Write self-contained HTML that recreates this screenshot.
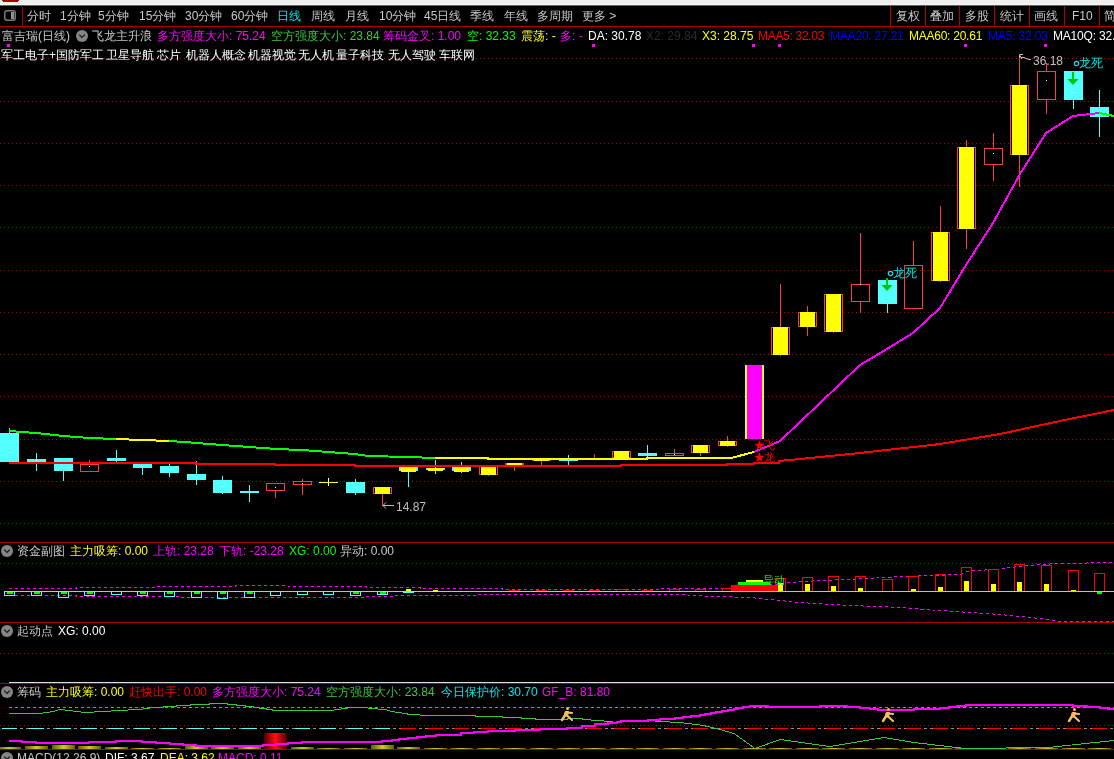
<!DOCTYPE html><html><head><meta charset="utf-8"><style>
html,body{margin:0;padding:0;background:#000;overflow:hidden;}
body{width:1114px;height:759px;position:relative;font-family:'Liberation Sans',sans-serif;font-size:12px;line-height:14px;-webkit-font-smoothing:antialiased;}
div{will-change:transform;}
svg{display:block;}
</style></head><body>
<svg style="position:absolute;left:0;top:0" width="1114" height="759" viewBox="0 0 1114 759" shape-rendering="crispEdges">
<rect x="0" y="0" width="1114" height="5" fill="#efefef"/>
<rect x="0" y="4" width="1114" height="1" fill="#f8f8f8"/>
<rect x="0" y="5" width="1114" height="1" fill="#606060"/>
<rect x="2" y="0" width="17" height="1.5" fill="#b00000" rx="0.7"/>
<rect x="0" y="26" width="1114" height="1" fill="#aa0000"/>
<rect x="22" y="7" width="1" height="19" fill="#aa0000"/>
<rect x="890" y="6" width="1" height="20" fill="#aa0000"/>
<rect x="925" y="6" width="1" height="20" fill="#aa0000"/>
<rect x="959" y="6" width="1" height="20" fill="#aa0000"/>
<rect x="994" y="6" width="1" height="20" fill="#aa0000"/>
<rect x="1029" y="6" width="1" height="20" fill="#aa0000"/>
<rect x="1064" y="6" width="1" height="20" fill="#aa0000"/>
<rect x="1099" y="6" width="1" height="20" fill="#aa0000"/>
<rect x="4.75" y="10.75" width="10.5" height="9.5" rx="2.2" fill="none" stroke="#7a7a7a" stroke-width="1.5" shape-rendering="auto"/>
<rect x="11" y="12" width="3" height="7" fill="#909090"/>
<rect x="7" y="44" width="3" height="3" fill="#ff00ff"/>
<rect x="592" y="44" width="3" height="3" fill="#ff00ff"/>
<rect x="752" y="44" width="3" height="3" fill="#ff00ff"/>
<rect x="778" y="44" width="3" height="3" fill="#ff00ff"/>
<rect x="964" y="44" width="3" height="3" fill="#ff00ff"/>
<rect x="1044" y="44" width="3" height="3" fill="#ff00ff"/>
<line x1="0" y1="58.5" x2="1114" y2="58.5" stroke="#b80000" stroke-width="1" stroke-dasharray="1 3"/>
<line x1="0" y1="101.5" x2="1114" y2="101.5" stroke="#b80000" stroke-width="1" stroke-dasharray="1 3"/>
<line x1="0" y1="143.5" x2="1114" y2="143.5" stroke="#b80000" stroke-width="1" stroke-dasharray="1 3"/>
<line x1="0" y1="185.5" x2="1114" y2="185.5" stroke="#b80000" stroke-width="1" stroke-dasharray="1 3"/>
<line x1="0" y1="227.5" x2="1114" y2="227.5" stroke="#b80000" stroke-width="1" stroke-dasharray="1 3"/>
<line x1="0" y1="270.5" x2="1114" y2="270.5" stroke="#b80000" stroke-width="1" stroke-dasharray="1 3"/>
<line x1="0" y1="312.5" x2="1114" y2="312.5" stroke="#b80000" stroke-width="1" stroke-dasharray="1 3"/>
<line x1="0" y1="354.5" x2="1114" y2="354.5" stroke="#b80000" stroke-width="1" stroke-dasharray="1 3"/>
<line x1="0" y1="396.5" x2="1114" y2="396.5" stroke="#b80000" stroke-width="1" stroke-dasharray="1 3"/>
<line x1="0" y1="439.5" x2="1114" y2="439.5" stroke="#b80000" stroke-width="1" stroke-dasharray="1 3"/>
<line x1="0" y1="481.5" x2="1114" y2="481.5" stroke="#b80000" stroke-width="1" stroke-dasharray="1 3"/>
<line x1="0" y1="523.5" x2="1114" y2="523.5" stroke="#b80000" stroke-width="1" stroke-dasharray="1 3"/>
</svg>
<svg style="position:absolute;left:0;top:0" width="1114" height="759" viewBox="0 0 1114 759" shape-rendering="crispEdges">
<defs><clipPath id="cm"><rect x="0" y="47" width="1114" height="495"/></clipPath></defs>
<g clip-path="url(#cm)">
<rect x="9" y="428" width="1" height="35" fill="#54ffff"/><rect x="0" y="433" width="19" height="29" fill="#54ffff"/><rect x="9" y="452" width="1" height="1" fill="#fff"/><rect x="36" y="453" width="1" height="18" fill="#54ffff"/><rect x="27" y="459" width="19" height="3" fill="#54ffff"/><rect x="36" y="460" width="1" height="1" fill="#fff"/><rect x="63" y="458" width="1" height="23" fill="#54ffff"/><rect x="54" y="458" width="19" height="13" fill="#54ffff"/><rect x="63" y="468" width="1" height="1" fill="#fff"/><rect x="89" y="460" width="1" height="4" fill="#ff3c3c"/><rect x="80.5" y="464.5" width="18" height="7" fill="none" stroke="#ff3c3c" stroke-width="1"/><rect x="89" y="466" width="1" height="1" fill="#fff"/><rect x="116" y="450" width="1" height="13" fill="#54ffff"/><rect x="107" y="458" width="19" height="3" fill="#54ffff"/><rect x="116" y="459" width="1" height="1" fill="#fff"/><rect x="142" y="464" width="1" height="11" fill="#54ffff"/><rect x="133" y="464" width="19" height="4" fill="#54ffff"/><rect x="142" y="466" width="1" height="1" fill="#fff"/><rect x="169" y="464" width="1" height="13" fill="#54ffff"/><rect x="160" y="466" width="19" height="7" fill="#54ffff"/><rect x="169" y="469" width="1" height="1" fill="#fff"/><rect x="196" y="461" width="1" height="24" fill="#54ffff"/><rect x="187" y="474" width="19" height="6" fill="#54ffff"/><rect x="196" y="477" width="1" height="1" fill="#fff"/><rect x="222" y="476" width="1" height="18" fill="#54ffff"/><rect x="213" y="480" width="19" height="13" fill="#54ffff"/><rect x="222" y="486" width="1" height="1" fill="#fff"/><rect x="249" y="485" width="1" height="17" fill="#54ffff"/><rect x="240" y="491" width="19" height="2" fill="#54ffff"/><rect x="249" y="492" width="1" height="1" fill="#fff"/><rect x="275" y="491" width="1" height="7" fill="#ff3c3c"/><rect x="266.5" y="483.5" width="18" height="7" fill="none" stroke="#ff3c3c" stroke-width="1"/><rect x="275" y="487" width="1" height="1" fill="#fff"/><rect x="302" y="479" width="1" height="2" fill="#ff3c3c"/><rect x="302" y="485" width="1" height="10" fill="#ff3c3c"/><rect x="293.5" y="481.5" width="18" height="3" fill="none" stroke="#ff3c3c" stroke-width="1"/><rect x="302" y="483" width="1" height="1" fill="#fff"/><rect x="328" y="478" width="1" height="8" fill="#fff"/><rect x="319" y="482" width="19" height="1" fill="#fff"/><rect x="321" y="482" width="15" height="1" fill="#ffff00"/><rect x="355" y="479" width="1" height="16" fill="#54ffff"/><rect x="346" y="482" width="19" height="11" fill="#54ffff"/><rect x="355" y="487" width="1" height="1" fill="#fff"/><rect x="382" y="487" width="1" height="19" fill="#ff3c3c"/><rect x="373.5" y="487.5" width="18" height="6" fill="none" stroke="#ff3c3c" stroke-width="1"/><rect x="375" y="487" width="15" height="7" fill="#ffff00"/><rect x="382" y="491" width="1" height="1" fill="#fff"/><rect x="408" y="467" width="1" height="20" fill="#54ffff"/><rect x="399" y="467" width="19" height="4" fill="#54ffff"/><rect x="401" y="467" width="15" height="5" fill="#ffff00"/><rect x="408" y="469" width="1" height="1" fill="#fff"/><rect x="435" y="460" width="1" height="14" fill="#54ffff"/><rect x="426" y="468" width="19" height="2" fill="#54ffff"/><rect x="428" y="468" width="15" height="3" fill="#ffff00"/><rect x="435" y="469" width="1" height="1" fill="#fff"/><rect x="461" y="462" width="1" height="11" fill="#54ffff"/><rect x="452" y="467" width="19" height="4" fill="#54ffff"/><rect x="454" y="467" width="15" height="5" fill="#ffff00"/><rect x="461" y="469" width="1" height="1" fill="#fff"/><rect x="488" y="466" width="1" height="10" fill="#ff3c3c"/><rect x="479.5" y="466.5" width="18" height="8" fill="none" stroke="#ff3c3c" stroke-width="1"/><rect x="481" y="466" width="15" height="9" fill="#ffff00"/><rect x="488" y="470" width="1" height="1" fill="#fff"/><rect x="514" y="463" width="1" height="8" fill="#ff3c3c"/><rect x="505.5" y="463.5" width="18" height="1" fill="none" stroke="#ff3c3c" stroke-width="1"/><rect x="507" y="463" width="15" height="2" fill="#ffff00"/><rect x="514" y="464" width="1" height="1" fill="#fff"/><rect x="541" y="459" width="1" height="6" fill="#ff3c3c"/><rect x="532.5" y="459.5" width="18" height="1" fill="none" stroke="#ff3c3c" stroke-width="1"/><rect x="534" y="459" width="15" height="2" fill="#ffff00"/><rect x="541" y="460" width="1" height="1" fill="#fff"/><rect x="568" y="455" width="1" height="11" fill="#54ffff"/><rect x="559" y="460" width="19" height="1" fill="#54ffff"/><rect x="568" y="460" width="1" height="1" fill="#fff"/><rect x="594" y="454" width="1" height="4" fill="#ff3c3c"/><rect x="585.5" y="458.5" width="18" height="0" fill="none" stroke="#ff3c3c" stroke-width="1"/><rect x="594" y="458" width="1" height="1" fill="#fff"/><rect x="621" y="451" width="1" height="8" fill="#ff3c3c"/><rect x="612.5" y="451.5" width="18" height="6" fill="none" stroke="#ff3c3c" stroke-width="1"/><rect x="614" y="451" width="15" height="7" fill="#ffff00"/><rect x="621" y="454" width="1" height="1" fill="#fff"/><rect x="647" y="445" width="1" height="13" fill="#54ffff"/><rect x="638" y="453" width="19" height="3" fill="#54ffff"/><rect x="647" y="454" width="1" height="1" fill="#fff"/><rect x="674" y="449" width="1" height="4" fill="#ff3c3c"/><rect x="665.5" y="453.5" width="18" height="2" fill="none" stroke="#ff3c3c" stroke-width="1"/><rect x="674" y="454" width="1" height="1" fill="#fff"/><rect x="700" y="445" width="1" height="11" fill="#ff3c3c"/><rect x="691.5" y="445.5" width="18" height="7" fill="none" stroke="#ff3c3c" stroke-width="1"/><rect x="693" y="445" width="15" height="8" fill="#ffff00"/><rect x="700" y="449" width="1" height="1" fill="#fff"/><rect x="727" y="436" width="1" height="11" fill="#ff3c3c"/><rect x="718.5" y="441.5" width="18" height="4" fill="none" stroke="#ff3c3c" stroke-width="1"/><rect x="720" y="441" width="15" height="5" fill="#ffff00"/><rect x="727" y="443" width="1" height="1" fill="#fff"/><rect x="745" y="365" width="19" height="74" fill="#ffff00"/><rect x="747" y="365" width="15" height="74" fill="#ff00ff"/><rect x="780" y="284" width="1" height="72" fill="#ff3c3c"/><rect x="771.5" y="327.5" width="18" height="27" fill="none" stroke="#ff3c3c" stroke-width="1"/><rect x="773" y="327" width="15" height="28" fill="#ffff00"/><rect x="780" y="328" width="1" height="1" fill="#fff"/><rect x="807" y="306" width="1" height="30" fill="#ff3c3c"/><rect x="798.5" y="312.5" width="18" height="14" fill="none" stroke="#ff3c3c" stroke-width="1"/><rect x="800" y="312" width="15" height="15" fill="#ffff00"/><rect x="807" y="317" width="1" height="1" fill="#fff"/><rect x="833" y="294" width="1" height="39" fill="#ff3c3c"/><rect x="824.5" y="294.5" width="18" height="37" fill="none" stroke="#ff3c3c" stroke-width="1"/><rect x="826" y="294" width="15" height="38" fill="#ffff00"/><rect x="833" y="306" width="1" height="1" fill="#fff"/><rect x="860" y="233" width="1" height="51" fill="#ff3c3c"/><rect x="860" y="302" width="1" height="11" fill="#ff3c3c"/><rect x="851.5" y="284.5" width="18" height="17" fill="none" stroke="#ff3c3c" stroke-width="1"/><rect x="860" y="284" width="1" height="1" fill="#fff"/><rect x="887" y="280" width="1" height="33" fill="#54ffff"/><rect x="878" y="280" width="19" height="24" fill="#54ffff"/><rect x="887" y="297" width="1" height="1" fill="#fff"/><rect x="913" y="241" width="1" height="24" fill="#ff3c3c"/><rect x="904.5" y="265.5" width="18" height="43" fill="none" stroke="#ff3c3c" stroke-width="1"/><rect x="940" y="206" width="1" height="76" fill="#ff3c3c"/><rect x="931.5" y="232.5" width="18" height="48" fill="none" stroke="#ff3c3c" stroke-width="1"/><rect x="933" y="232" width="15" height="49" fill="#ffff00"/><rect x="940" y="256" width="1" height="1" fill="#fff"/><rect x="966" y="140" width="1" height="109" fill="#ff3c3c"/><rect x="957.5" y="147.5" width="18" height="81" fill="none" stroke="#ff3c3c" stroke-width="1"/><rect x="959" y="147" width="15" height="82" fill="#ffff00"/><rect x="966" y="176" width="1" height="1" fill="#fff"/><rect x="993" y="133" width="1" height="15" fill="#ff3c3c"/><rect x="993" y="165" width="1" height="16" fill="#ff3c3c"/><rect x="984.5" y="148.5" width="18" height="16" fill="none" stroke="#ff3c3c" stroke-width="1"/><rect x="993" y="153" width="1" height="1" fill="#fff"/><rect x="1019" y="56" width="1" height="131" fill="#ff3c3c"/><rect x="1010.5" y="85.5" width="18" height="69" fill="none" stroke="#ff3c3c" stroke-width="1"/><rect x="1012" y="85" width="15" height="70" fill="#ffff00"/><rect x="1019" y="108" width="1" height="1" fill="#fff"/><rect x="1046" y="63" width="1" height="8" fill="#ff3c3c"/><rect x="1046" y="100" width="1" height="14" fill="#ff3c3c"/><rect x="1037.5" y="71.5" width="18" height="28" fill="none" stroke="#ff3c3c" stroke-width="1"/><rect x="1046" y="80" width="1" height="1" fill="#fff"/><rect x="1073" y="71" width="1" height="38" fill="#54ffff"/><rect x="1064" y="71" width="19" height="29" fill="#54ffff"/><rect x="1073" y="92" width="1" height="1" fill="#fff"/><rect x="1099" y="90" width="1" height="47" fill="#54ffff"/><rect x="1090" y="107" width="19" height="10" fill="#54ffff"/><rect x="1099" y="112" width="1" height="1" fill="#fff"/>
<polyline points="9,431 22,432 36,433 45,434 55,435 63,436 89,438 116,439 142,440 169,441 185,442 196,443 210,444 222,445 236,446 249,447 263,448 276,449 302,450 315,451 328,452 341,453 355,454 368,456 408,457 435,458" fill="none" stroke="#00ff00" stroke-width="2"/>
<polyline points="116,439 142,440 169,441" fill="none" stroke="#ffff00" stroke-width="2"/>
<polyline points="435,458 488,458 488,459 647,459 647,458 731,458 754,452" fill="none" stroke="#ffff00" stroke-width="2"/>
<polyline points="9,463 196,463 196,464 275,464 275,465 355,465 355,466 621,466 621,465 727,465 727,464 754,464 754,463 779,463 779,461 800,459 860,453 940,444 1000,434 1060,421 1114,410" fill="none" stroke="#ff0000" stroke-width="2"/>
<polyline points="754,452 780,441 860,365 887,349 913,333 940,308 966,265 993,223 1020,174 1046,133 1073,116 1099,113" fill="none" stroke="#ff00ff" stroke-width="2"/>
<polyline points="1099,113 1114,116" fill="none" stroke="#00ff00" stroke-width="2"/>
<rect x="886" y="278" width="2" height="8" fill="#00c800"/><polygon points="881.5,285 892.5,285 887,291" fill="#00c800" shape-rendering="auto"/>
<rect x="1072" y="72" width="2" height="8" fill="#00c800"/><polygon points="1067.5,79 1078.5,79 1073,85" fill="#00c800" shape-rendering="auto"/>
<polygon points="759.50,440.30 760.78,443.73 764.45,443.89 761.58,446.17 762.56,449.71 759.50,447.68 756.44,449.71 757.42,446.17 754.55,443.89 758.22,443.73" fill="#ff0000" shape-rendering="auto"/>
<polygon points="759.50,452.30 760.78,455.73 764.45,455.89 761.58,458.17 762.56,461.71 759.50,459.68 756.44,461.71 757.42,458.17 754.55,455.89 758.22,455.73" fill="#ff0000" shape-rendering="auto"/>
<g stroke="#c0c0c0" stroke-width="1" fill="none" shape-rendering="auto">
<line x1="383" y1="505.5" x2="394" y2="505.5"/><polyline points="386,502.5 383,505.5 386,508.5"/>
<polyline points="1019.5,58 1019.5,54.5 1023,54.5"/><line x1="1019.5" y1="55" x2="1022" y2="59"/><polyline points="1021,57.5 1024,57.5 1026,58.5 1029,59.5 1031,59.5"/>
<circle cx="890.5" cy="273.5" r="2.2" fill="none" stroke="#00e8e8" stroke-width="1.2" shape-rendering="auto"/>
<circle cx="1076.5" cy="63.5" r="2.2" fill="none" stroke="#00e8e8" stroke-width="1.2" shape-rendering="auto"/>
</g>
</g>
</svg>
<svg style="position:absolute;left:0;top:0" width="1114" height="759" viewBox="0 0 1114 759" shape-rendering="crispEdges">
<rect x="0" y="542" width="1114" height="1" fill="#aa0000"/>
<rect x="0" y="622" width="1114" height="1" fill="#aa0000"/>
<rect x="0" y="683" width="1114" height="1" fill="#aa0000"/>
<rect x="9" y="682" width="1105" height="1" fill="#e0e0e0"/>
<rect x="0" y="749" width="1114" height="1" fill="#aa0000"/>
<line x1="0" y1="563.5" x2="1114" y2="563.5" stroke="#b80000" stroke-width="1" stroke-dasharray="1 3"/>
<line x1="0" y1="653.5" x2="1114" y2="653.5" stroke="#b80000" stroke-width="1" stroke-dasharray="1 3"/>
<line x1="0" y1="725.5" x2="1114" y2="725.5" stroke="#b80000" stroke-width="1" stroke-dasharray="1 3"/>
<rect x="4" y="591" width="1110" height="1" fill="#c0c0c0"/>
<polyline points="9,588.5 76,588.5 76,587.5 157,587.5 157,586.5 235,586.5 235,585.5 288,585.5 288,586.5 366,586.5 366,587.5 420,587.5 420,588.5 502,588.5 502,589.5 660,589.5 660,588.5 740,588.5 790,582.5 820,580.5 870,578.5 900,576.5 960,574.5 970,570.5 1000,569.5 1010,567.5 1040,564.5 1060,563.5 1114,562.5" fill="none" stroke="#ff00ff" stroke-width="1" stroke-dasharray="3 3"/>
<polyline points="9,595.5 76,595.5 76,596.5 180,596.5 180,597.5 366,597.5 366,596.5 394,596.5 394,595.5 475,595.5 475,594.5 688,594.5 688,595.5 750,597.5 800,602.5 850,605.5 900,607.5 940,610.5 1000,614.5 1040,618.5 1060,621.5 1114,621.5" fill="none" stroke="#ff00ff" stroke-width="1" stroke-dasharray="3 3"/>
<rect x="4.5" y="591.5" width="10" height="4" fill="none" stroke="#54ffff"/>
<rect x="7" y="592" width="6" height="2" fill="#00ff00"/>
<rect x="31.5" y="591.5" width="10" height="4" fill="none" stroke="#54ffff"/>
<rect x="34" y="592" width="6" height="2" fill="#00ff00"/>
<rect x="58.5" y="591.5" width="10" height="6" fill="none" stroke="#54ffff"/>
<rect x="61" y="592" width="6" height="2" fill="#00ff00"/>
<rect x="84.5" y="591.5" width="10" height="4" fill="none" stroke="#54ffff"/>
<rect x="87" y="592" width="6" height="2" fill="#00ff00"/>
<rect x="111.5" y="591.5" width="10" height="3" fill="none" stroke="#54ffff"/>
<rect x="137.5" y="591.5" width="10" height="4" fill="none" stroke="#54ffff"/>
<rect x="140" y="592" width="6" height="2" fill="#00ff00"/>
<rect x="164.5" y="591.5" width="10" height="5" fill="none" stroke="#54ffff"/>
<rect x="167" y="592" width="6" height="2" fill="#00ff00"/>
<rect x="191.5" y="591.5" width="10" height="6" fill="none" stroke="#54ffff"/>
<rect x="194" y="592" width="6" height="2" fill="#00ff00"/>
<rect x="217.5" y="591.5" width="10" height="7" fill="none" stroke="#54ffff"/>
<rect x="220" y="592" width="6" height="2" fill="#00ff00"/>
<rect x="244.5" y="591.5" width="10" height="6" fill="none" stroke="#54ffff"/>
<rect x="247" y="592" width="6" height="2" fill="#00ff00"/>
<rect x="270.5" y="591.5" width="10" height="4" fill="none" stroke="#54ffff"/>
<rect x="297.5" y="591.5" width="10" height="3" fill="none" stroke="#54ffff"/>
<rect x="323.5" y="591.5" width="10" height="3" fill="none" stroke="#54ffff"/>
<rect x="350.5" y="591.5" width="10" height="4" fill="none" stroke="#54ffff"/>
<rect x="353" y="592" width="6" height="2" fill="#00ff00"/>
<rect x="377.5" y="591.5" width="10" height="3" fill="none" stroke="#54ffff"/>
<rect x="380" y="592" width="6" height="2" fill="#00ff00"/>
<rect x="403" y="591" width="11" height="2" fill="#54ffff"/><rect x="406" y="589" width="5" height="2" fill="#ffff00"/>
<rect x="433" y="590" width="5" height="2" fill="#ffff00"/>
<rect x="509" y="590" width="11" height="1" fill="#ff0000"/>
<rect x="536" y="590" width="11" height="1" fill="#ff0000"/>
<rect x="563" y="590" width="11" height="1" fill="#ff0000"/>
<rect x="589" y="590" width="11" height="1" fill="#ff0000"/>
<rect x="642" y="590" width="11" height="1" fill="#ff0000"/>
<polyline points="616.5,591 616.5,589.5 626.5,589.5 626.5,591" fill="none" stroke="#ff0000"/>
<polyline points="669.5,591 669.5,589.5 679.5,589.5 679.5,591" fill="none" stroke="#ff0000"/>
<polyline points="695.5,591 695.5,589.5 705.5,589.5 705.5,591" fill="none" stroke="#ff0000"/>
<polyline points="722.5,591 722.5,588.5 732.5,588.5 732.5,591" fill="none" stroke="#ff0000"/>
<rect x="731" y="585" width="47" height="6" fill="#ff0000"/>
<rect x="738" y="582" width="32" height="3" fill="#00ff00"/>
<rect x="746" y="580" width="17" height="2" fill="#ffff00"/>
<rect x="778" y="583" width="5" height="8" fill="#ffff00"/>
<polyline points="775.5,591 775.5,578.5 785.5,578.5 785.5,591" fill="none" stroke="#ff0000"/>
<polyline points="802.5,591 802.5,577.5 812.5,577.5 812.5,591" fill="none" stroke="#ff0000"/>
<rect x="805" y="584" width="5" height="7" fill="#ffff00"/>
<polyline points="828.5,591 828.5,576.5 838.5,576.5 838.5,591" fill="none" stroke="#ff0000"/>
<rect x="831" y="586" width="5" height="5" fill="#ffff00"/>
<polyline points="855.5,591 855.5,576.5 865.5,576.5 865.5,591" fill="none" stroke="#ff0000"/>
<rect x="858" y="588" width="5" height="3" fill="#ffff00"/>
<polyline points="882.5,591 882.5,579.5 892.5,579.5 892.5,591" fill="none" stroke="#ff0000"/>
<polyline points="908.5,591 908.5,576.5 918.5,576.5 918.5,591" fill="none" stroke="#ff0000"/>
<rect x="911" y="589" width="5" height="2" fill="#ffff00"/>
<polyline points="935.5,591 935.5,574.5 945.5,574.5 945.5,591" fill="none" stroke="#ff0000"/>
<rect x="938" y="587" width="5" height="4" fill="#ffff00"/>
<polyline points="961.5,591 961.5,567.5 971.5,567.5 971.5,591" fill="none" stroke="#ff0000"/>
<rect x="964" y="581" width="5" height="10" fill="#ffff00"/>
<polyline points="988.5,591 988.5,569.5 998.5,569.5 998.5,591" fill="none" stroke="#ff0000"/>
<rect x="991" y="584" width="5" height="7" fill="#ffff00"/>
<polyline points="1014.5,591 1014.5,564.5 1024.5,564.5 1024.5,591" fill="none" stroke="#ff0000"/>
<rect x="1017" y="582" width="5" height="9" fill="#ffff00"/>
<polyline points="1041.5,591 1041.5,565.5 1051.5,565.5 1051.5,591" fill="none" stroke="#ff0000"/>
<rect x="1044" y="584" width="5" height="7" fill="#ffff00"/>
<polyline points="1068.5,591 1068.5,570.5 1078.5,570.5 1078.5,591" fill="none" stroke="#ff0000"/>
<rect x="1071" y="590" width="5" height="1" fill="#ffff00"/>
<polyline points="1094.5,591 1094.5,573.5 1104.5,573.5 1104.5,591" fill="none" stroke="#ff0000"/>
<rect x="1097" y="592" width="5" height="2" fill="#00ff00"/>
<line x1="9" y1="707.5" x2="1114" y2="707.5" stroke="#00c8c8" stroke-dasharray="3 3"/>
<rect x="2" y="728" width="15" height="1" fill="#54ffff"/>
<rect x="20" y="728" width="3" height="1" fill="#909090"/>
<rect x="26" y="728" width="3" height="1" fill="#909090"/>
<rect x="29" y="728" width="15" height="1" fill="#54ffff"/>
<rect x="47" y="728" width="3" height="1" fill="#909090"/>
<rect x="53" y="728" width="3" height="1" fill="#909090"/>
<rect x="56" y="728" width="15" height="1" fill="#54ffff"/>
<rect x="74" y="728" width="3" height="1" fill="#909090"/>
<rect x="80" y="728" width="3" height="1" fill="#909090"/>
<rect x="82" y="728" width="15" height="1" fill="#54ffff"/>
<rect x="100" y="728" width="3" height="1" fill="#909090"/>
<rect x="106" y="728" width="3" height="1" fill="#909090"/>
<rect x="109" y="728" width="15" height="1" fill="#54ffff"/>
<rect x="127" y="728" width="3" height="1" fill="#909090"/>
<rect x="133" y="728" width="3" height="1" fill="#909090"/>
<rect x="135" y="728" width="15" height="1" fill="#54ffff"/>
<rect x="153" y="728" width="3" height="1" fill="#909090"/>
<rect x="159" y="728" width="3" height="1" fill="#909090"/>
<rect x="162" y="728" width="15" height="1" fill="#54ffff"/>
<rect x="180" y="728" width="3" height="1" fill="#909090"/>
<rect x="186" y="728" width="3" height="1" fill="#909090"/>
<rect x="189" y="728" width="15" height="1" fill="#54ffff"/>
<rect x="207" y="728" width="3" height="1" fill="#909090"/>
<rect x="213" y="728" width="3" height="1" fill="#909090"/>
<rect x="215" y="728" width="15" height="1" fill="#54ffff"/>
<rect x="233" y="728" width="3" height="1" fill="#909090"/>
<rect x="239" y="728" width="3" height="1" fill="#909090"/>
<rect x="242" y="728" width="15" height="1" fill="#54ffff"/>
<rect x="260" y="728" width="3" height="1" fill="#909090"/>
<rect x="266" y="728" width="3" height="1" fill="#909090"/>
<rect x="268" y="728" width="15" height="1" fill="#54ffff"/>
<rect x="286" y="728" width="3" height="1" fill="#909090"/>
<rect x="292" y="728" width="3" height="1" fill="#909090"/>
<rect x="295" y="728" width="15" height="1" fill="#54ffff"/>
<rect x="313" y="728" width="3" height="1" fill="#909090"/>
<rect x="319" y="728" width="3" height="1" fill="#909090"/>
<rect x="321" y="728" width="15" height="1" fill="#54ffff"/>
<rect x="339" y="728" width="3" height="1" fill="#909090"/>
<rect x="345" y="728" width="3" height="1" fill="#909090"/>
<rect x="348" y="728" width="15" height="1" fill="#54ffff"/>
<rect x="366" y="728" width="3" height="1" fill="#909090"/>
<rect x="372" y="728" width="3" height="1" fill="#909090"/>
<rect x="375" y="728" width="15" height="1" fill="#54ffff"/>
<rect x="393" y="728" width="3" height="1" fill="#909090"/>
<rect x="399" y="728" width="3" height="1" fill="#909090"/>
<rect x="401" y="728" width="15" height="1" fill="#ff0000"/>
<rect x="419" y="728" width="3" height="1" fill="#909090"/>
<rect x="425" y="728" width="3" height="1" fill="#909090"/>
<rect x="428" y="728" width="15" height="1" fill="#ff0000"/>
<rect x="446" y="728" width="3" height="1" fill="#909090"/>
<rect x="452" y="728" width="3" height="1" fill="#909090"/>
<rect x="454" y="728" width="15" height="1" fill="#ff0000"/>
<rect x="472" y="728" width="3" height="1" fill="#909090"/>
<rect x="478" y="728" width="3" height="1" fill="#909090"/>
<rect x="481" y="728" width="15" height="1" fill="#ff0000"/>
<rect x="499" y="728" width="3" height="1" fill="#909090"/>
<rect x="505" y="728" width="3" height="1" fill="#909090"/>
<rect x="507" y="728" width="15" height="1" fill="#ff0000"/>
<rect x="525" y="728" width="3" height="1" fill="#909090"/>
<rect x="531" y="728" width="3" height="1" fill="#909090"/>
<rect x="534" y="728" width="15" height="1" fill="#ff0000"/>
<rect x="552" y="728" width="3" height="1" fill="#909090"/>
<rect x="558" y="728" width="3" height="1" fill="#909090"/>
<rect x="561" y="728" width="15" height="1" fill="#ff0000"/>
<rect x="579" y="728" width="3" height="1" fill="#909090"/>
<rect x="585" y="728" width="3" height="1" fill="#909090"/>
<rect x="587" y="728" width="15" height="1" fill="#ff0000"/>
<rect x="605" y="728" width="3" height="1" fill="#909090"/>
<rect x="611" y="728" width="3" height="1" fill="#909090"/>
<rect x="614" y="728" width="15" height="1" fill="#ff0000"/>
<rect x="632" y="728" width="3" height="1" fill="#909090"/>
<rect x="638" y="728" width="3" height="1" fill="#909090"/>
<rect x="640" y="728" width="15" height="1" fill="#ff0000"/>
<rect x="658" y="728" width="3" height="1" fill="#909090"/>
<rect x="664" y="728" width="3" height="1" fill="#909090"/>
<rect x="667" y="728" width="15" height="1" fill="#ff0000"/>
<rect x="685" y="728" width="3" height="1" fill="#909090"/>
<rect x="691" y="728" width="3" height="1" fill="#909090"/>
<rect x="693" y="728" width="15" height="1" fill="#ff0000"/>
<rect x="711" y="728" width="3" height="1" fill="#909090"/>
<rect x="717" y="728" width="3" height="1" fill="#909090"/>
<rect x="720" y="728" width="15" height="1" fill="#ff0000"/>
<rect x="738" y="728" width="3" height="1" fill="#909090"/>
<rect x="744" y="728" width="3" height="1" fill="#909090"/>
<rect x="747" y="728" width="15" height="1" fill="#ff0000"/>
<rect x="765" y="728" width="3" height="1" fill="#909090"/>
<rect x="771" y="728" width="3" height="1" fill="#909090"/>
<rect x="773" y="728" width="15" height="1" fill="#ff0000"/>
<rect x="791" y="728" width="3" height="1" fill="#909090"/>
<rect x="797" y="728" width="3" height="1" fill="#909090"/>
<rect x="800" y="728" width="15" height="1" fill="#ff0000"/>
<rect x="818" y="728" width="3" height="1" fill="#909090"/>
<rect x="824" y="728" width="3" height="1" fill="#909090"/>
<rect x="826" y="728" width="15" height="1" fill="#ff0000"/>
<rect x="844" y="728" width="3" height="1" fill="#909090"/>
<rect x="850" y="728" width="3" height="1" fill="#909090"/>
<rect x="853" y="728" width="15" height="1" fill="#ff0000"/>
<rect x="871" y="728" width="3" height="1" fill="#909090"/>
<rect x="877" y="728" width="3" height="1" fill="#909090"/>
<rect x="880" y="728" width="15" height="1" fill="#ff0000"/>
<rect x="898" y="728" width="3" height="1" fill="#909090"/>
<rect x="904" y="728" width="3" height="1" fill="#909090"/>
<rect x="906" y="728" width="15" height="1" fill="#ff0000"/>
<rect x="924" y="728" width="3" height="1" fill="#909090"/>
<rect x="930" y="728" width="3" height="1" fill="#909090"/>
<rect x="933" y="728" width="15" height="1" fill="#ff0000"/>
<rect x="951" y="728" width="3" height="1" fill="#909090"/>
<rect x="957" y="728" width="3" height="1" fill="#909090"/>
<rect x="959" y="728" width="15" height="1" fill="#ff0000"/>
<rect x="977" y="728" width="3" height="1" fill="#909090"/>
<rect x="983" y="728" width="3" height="1" fill="#909090"/>
<rect x="986" y="728" width="15" height="1" fill="#ff0000"/>
<rect x="1004" y="728" width="3" height="1" fill="#909090"/>
<rect x="1010" y="728" width="3" height="1" fill="#909090"/>
<rect x="1012" y="728" width="15" height="1" fill="#ff0000"/>
<rect x="1030" y="728" width="3" height="1" fill="#909090"/>
<rect x="1036" y="728" width="3" height="1" fill="#909090"/>
<rect x="1039" y="728" width="15" height="1" fill="#ff0000"/>
<rect x="1057" y="728" width="3" height="1" fill="#909090"/>
<rect x="1063" y="728" width="3" height="1" fill="#909090"/>
<rect x="1066" y="728" width="15" height="1" fill="#ff0000"/>
<rect x="1084" y="728" width="3" height="1" fill="#909090"/>
<rect x="1090" y="728" width="3" height="1" fill="#909090"/>
<rect x="1092" y="728" width="15" height="1" fill="#ff0000"/>
<rect x="1110" y="728" width="3" height="1" fill="#909090"/>
<rect x="1116" y="728" width="3" height="1" fill="#909090"/>
<defs><linearGradient id="yg" x1="0" x2="1"><stop offset="0" stop-color="#6a5c00"/><stop offset="0.5" stop-color="#d0c828"/><stop offset="1" stop-color="#6a5c00"/></linearGradient><linearGradient id="rg" x1="0" x2="1"><stop offset="0" stop-color="#500000"/><stop offset="0.5" stop-color="#ff1010"/><stop offset="1" stop-color="#500000"/></linearGradient></defs>
<rect x="-2" y="747" width="23" height="2" fill="url(#yg)"/>
<rect x="25" y="746" width="23" height="3" fill="url(#yg)"/>
<rect x="52" y="745" width="23" height="4" fill="url(#yg)"/>
<rect x="78" y="746" width="23" height="3" fill="url(#yg)"/>
<rect x="105" y="747" width="23" height="2" fill="url(#yg)"/>
<rect x="131" y="748" width="23" height="1" fill="url(#yg)"/>
<rect x="158" y="748" width="23" height="1" fill="url(#yg)"/>
<rect x="185" y="746" width="23" height="3" fill="url(#yg)"/>
<rect x="211" y="745" width="23" height="4" fill="url(#yg)"/>
<rect x="238" y="745" width="23" height="4" fill="url(#yg)"/>
<rect x="291" y="747" width="23" height="2" fill="url(#yg)"/>
<rect x="317" y="748" width="23" height="1" fill="url(#yg)"/>
<rect x="344" y="748" width="23" height="1" fill="url(#yg)"/>
<rect x="371" y="745" width="23" height="4" fill="url(#yg)"/>
<rect x="397" y="747" width="23" height="2" fill="url(#yg)"/>
<rect x="424" y="748" width="23" height="1" fill="url(#yg)"/>
<rect x="450" y="748" width="23" height="1" fill="url(#yg)"/>
<rect x="477" y="748" width="23" height="1" fill="url(#yg)"/>
<rect x="503" y="748" width="23" height="1" fill="url(#yg)"/>
<rect x="530" y="748" width="23" height="1" fill="url(#yg)"/>
<rect x="557" y="748" width="23" height="1" fill="url(#yg)"/>
<rect x="583" y="748" width="23" height="1" fill="url(#yg)"/>
<rect x="610" y="748" width="23" height="1" fill="url(#yg)"/>
<rect x="636" y="748" width="23" height="1" fill="url(#yg)"/>
<rect x="663" y="748" width="23" height="1" fill="url(#yg)"/>
<rect x="689" y="748" width="23" height="1" fill="url(#yg)"/>
<rect x="716" y="748" width="23" height="1" fill="url(#yg)"/>
<rect x="743" y="748" width="23" height="1" fill="url(#yg)"/>
<rect x="769" y="748" width="23" height="1" fill="url(#yg)"/>
<rect x="796" y="748" width="23" height="1" fill="url(#yg)"/>
<rect x="822" y="748" width="23" height="1" fill="url(#yg)"/>
<rect x="849" y="748" width="23" height="1" fill="url(#yg)"/>
<rect x="876" y="748" width="23" height="1" fill="url(#yg)"/>
<rect x="902" y="748" width="23" height="1" fill="url(#yg)"/>
<rect x="929" y="748" width="23" height="1" fill="url(#yg)"/>
<rect x="955" y="748" width="23" height="1" fill="url(#yg)"/>
<rect x="982" y="748" width="23" height="1" fill="url(#yg)"/>
<rect x="1008" y="748" width="23" height="1" fill="url(#yg)"/>
<rect x="1035" y="748" width="23" height="1" fill="url(#yg)"/>
<rect x="1062" y="748" width="23" height="1" fill="url(#yg)"/>
<rect x="1088" y="748" width="23" height="1" fill="url(#yg)"/>
<rect x="264" y="733" width="23" height="16" fill="url(#rg)"/>
<polyline points="9,713.5 40,713.5 47,712.5 53,711.5 60,709.5 69,710.5 77,711.5 85,712.5 103,711.5 120,710.5 137,709.5 149,708.5 149,707.5 163,707.5 163,706.5 176,706.5 176,705.5 190,705.5 190,704.5 209,704.5 209,703.5 227,703.5 227,704.5 236,704.5 236,705.5 245,705.5 245,706.5 253,706.5 253,707.5 259,707.5 259,708.5 266,708.5 266,709.5 272,709.5 272,710.5 331,710.5 338,709.5 345,708.5 352,707.5 366,707.5 370,708.5 385,709.5 392,711.5 398,712.5 405,713.5 410,714.5 430,715.5 475,715.5 475,716.5 502,716.5 502,717.5 521,717.5 521,718.5 535,718.5 535,719.5 567,719.5 567,718.5 582,718.5 582,719.5 600,720.5 608,721.5 617,722.5 628,721.5 648,720.5 661,721.5 679,722.5 688,723.5 696,724.5 703,725.5 708,726.5 712,727.5 716,728.5 720,729.5 734,733.5 755,748.5 780,739.5 830,746.5 884,737.5 914,742.5 965,748.5 1048,747.5 1114,740.5" fill="none" stroke="#3cc83c" stroke-width="1"/>
<polyline points="9,741 22,741 22,742 36,742 36,743 89,743 89,742 116,742 116,741 142,741 142,742 156,742 156,743 170,743 170,744 183,744 183,745 196,745 196,746 263,746 263,745 276,745 276,744 288,744 288,743 302,743 302,742 382,742 382,741 392,741 392,740 399,740 399,739 408,739 408,738 417,738 417,737 426,737 426,736 436,736 436,735 461,735 461,733 474,733 474,732 488,732 488,731 515,731 515,730 540,730 540,729 567,729 567,728 582,728 582,726 595,726 595,724 600,724 608,724 608,723 617,723 617,722 621,722 621,721 648,721 648,720 660,720 660,719 675,719 675,718 683,718 683,717 691,717 691,716 700,716 700,715 705,715 705,714 711,714 711,713 716,713 716,712 722,712 722,711 728,711 728,710 734,710 734,709 738,709 738,708 743,708 743,707 750,707 750,706 768,706 768,707 820,707 820,706 847,706 847,707 860,707 860,708 870,708 870,709 878,709 878,710 914,710 914,709 940,709 940,708 949,708 949,707 957,707 957,706 966,706 966,705 1073,705 1073,706 1087,706 1087,707 1100,707 1100,708 1108,708 1108,709 1114,709" fill="none" stroke="#ff00ff" stroke-width="2"/>
<g shape-rendering="auto" stroke="#f5c060" stroke-linecap="round" stroke-linejoin="round" fill="none"><circle cx="567.5" cy="708.5" r="1.5" fill="#f5c060" stroke="none"/><polyline points="562,720 565.5,714.5 567,712" stroke-width="2.4"/><polygon points="565.5,711.5 568.5,711.5 567.5,716 564.5,716" fill="#f5c060" stroke-width="1"/><polyline points="566,714.5 572,720" stroke-width="2.2"/><polyline points="567,712.5 572,713" stroke-width="2.2"/></g>
<g shape-rendering="auto" stroke="#f5c060" stroke-linecap="round" stroke-linejoin="round" fill="none"><circle cx="888.5" cy="709.5" r="1.5" fill="#f5c060" stroke="none"/><polyline points="883,721 886.5,715.5 888,713" stroke-width="2.4"/><polygon points="886.5,712.5 889.5,712.5 888.5,717 885.5,717" fill="#f5c060" stroke-width="1"/><polyline points="887,715.5 893,721" stroke-width="2.2"/><polyline points="888,713.5 893,714" stroke-width="2.2"/></g>
<g shape-rendering="auto" stroke="#f5c060" stroke-linecap="round" stroke-linejoin="round" fill="none"><circle cx="1074.5" cy="709.5" r="1.5" fill="#f5c060" stroke="none"/><polyline points="1069,721 1072.5,715.5 1074,713" stroke-width="2.4"/><polygon points="1072.5,712.5 1075.5,712.5 1074.5,717 1071.5,717" fill="#f5c060" stroke-width="1"/><polyline points="1073,715.5 1079,721" stroke-width="2.2"/><polyline points="1074,713.5 1079,714" stroke-width="2.2"/></g>
</svg>
<div style="position:absolute;left:27px;top:9px;color:#c8c8c8;font-size:12px;white-space:nowrap;">分时</div>
<div style="position:absolute;left:60px;top:9px;color:#c8c8c8;font-size:12px;white-space:nowrap;">1分钟</div>
<div style="position:absolute;left:98px;top:9px;color:#c8c8c8;font-size:12px;white-space:nowrap;">5分钟</div>
<div style="position:absolute;left:139px;top:9px;color:#c8c8c8;font-size:12px;white-space:nowrap;">15分钟</div>
<div style="position:absolute;left:185px;top:9px;color:#c8c8c8;font-size:12px;white-space:nowrap;">30分钟</div>
<div style="position:absolute;left:231px;top:9px;color:#c8c8c8;font-size:12px;white-space:nowrap;">60分钟</div>
<div style="position:absolute;left:311px;top:9px;color:#c8c8c8;font-size:12px;white-space:nowrap;">周线</div>
<div style="position:absolute;left:345px;top:9px;color:#c8c8c8;font-size:12px;white-space:nowrap;">月线</div>
<div style="position:absolute;left:379px;top:9px;color:#c8c8c8;font-size:12px;white-space:nowrap;">10分钟</div>
<div style="position:absolute;left:424px;top:9px;color:#c8c8c8;font-size:12px;white-space:nowrap;">45日线</div>
<div style="position:absolute;left:470px;top:9px;color:#c8c8c8;font-size:12px;white-space:nowrap;">季线</div>
<div style="position:absolute;left:504px;top:9px;color:#c8c8c8;font-size:12px;white-space:nowrap;">年线</div>
<div style="position:absolute;left:537px;top:9px;color:#c8c8c8;font-size:12px;white-space:nowrap;">多周期</div>
<div style="position:absolute;left:582px;top:9px;color:#c8c8c8;font-size:12px;white-space:nowrap;">更多 &gt;</div>
<div style="position:absolute;left:277px;top:9px;color:#00e8e8;font-size:12px;white-space:nowrap;">日线</div>
<div style="position:absolute;left:896px;top:9px;color:#c8c8c8;font-size:12px;white-space:nowrap;">复权</div>
<div style="position:absolute;left:930px;top:9px;color:#c8c8c8;font-size:12px;white-space:nowrap;">叠加</div>
<div style="position:absolute;left:965px;top:9px;color:#c8c8c8;font-size:12px;white-space:nowrap;">多股</div>
<div style="position:absolute;left:1000px;top:9px;color:#c8c8c8;font-size:12px;white-space:nowrap;">统计</div>
<div style="position:absolute;left:1034px;top:9px;color:#c8c8c8;font-size:12px;white-space:nowrap;">画线</div>
<div style="position:absolute;left:1072px;top:9px;color:#c8c8c8;font-size:12px;white-space:nowrap;">F10</div>
<div style="position:absolute;left:1104px;top:9px;color:#c8c8c8;font-size:12px;white-space:nowrap;">简</div>
<div style="position:absolute;left:2px;top:29px;color:#c8c8c8;font-size:12px;white-space:nowrap;">富吉瑞(日线)</div>
<svg style="position:absolute;left:76px;top:30px" width="13" height="13" viewBox="0 0 13 13"><circle cx="6" cy="6" r="6" fill="#858585"/><polyline points="3.2,4.6 6,7.4 8.8,4.6" fill="none" stroke="#1a1a1a" stroke-width="1.3"/></svg>
<div style="position:absolute;left:92px;top:29px;color:#c8c8c8;font-size:12px;white-space:nowrap;">飞龙主升浪</div>
<div style="position:absolute;left:157px;top:29px;color:#ff00ff;font-size:12px;white-space:nowrap;">多方强度大小: 75.24</div>
<div style="position:absolute;left:271px;top:29px;color:#3cc83c;font-size:12px;white-space:nowrap;">空方强度大小: 23.84</div>
<div style="position:absolute;left:383px;top:29px;color:#ff00ff;font-size:12px;white-space:nowrap;">筹码金叉: 1.00</div>
<div style="position:absolute;left:467px;top:29px;color:#00ff00;font-size:12px;white-space:nowrap;">空: 32.33</div>
<div style="position:absolute;left:521px;top:29px;color:#ffff00;font-size:12px;white-space:nowrap;">震荡: -</div>
<div style="position:absolute;left:560px;top:29px;color:#ff00ff;font-size:12px;white-space:nowrap;">多: -</div>
<div style="position:absolute;left:588px;top:29px;color:#ffffff;font-size:12px;white-space:nowrap;">DA: 30.78</div>
<div style="position:absolute;left:646px;top:29px;color:#2a2a2a;font-size:12px;white-space:nowrap;">X2: 29.84</div>
<div style="position:absolute;left:702px;top:29px;color:#ffff00;font-size:12px;white-space:nowrap;">X3: 28.75</div>
<div style="position:absolute;left:758px;top:29px;color:#ff0000;font-size:12px;white-space:nowrap;letter-spacing:-0.3px">MAA5: 32.03</div>
<div style="position:absolute;left:830px;top:29px;color:#0000ff;font-size:12px;white-space:nowrap;letter-spacing:-0.2px">MAA20: 27.21</div>
<div style="position:absolute;left:909px;top:29px;color:#ffff00;font-size:12px;white-space:nowrap;letter-spacing:-0.25px">MAA60: 20.61</div>
<div style="position:absolute;left:988px;top:29px;color:#0000ff;font-size:12px;white-space:nowrap;letter-spacing:-0.15px">MA5: 32.03</div>
<div style="position:absolute;left:1053px;top:29px;color:#ffffff;font-size:12px;white-space:nowrap;letter-spacing:-0.2px">MA10Q: 32.03</div>
<div style="position:absolute;left:1px;top:48px;color:#ffffff;font-size:12px;white-space:nowrap;">军工电子+国防军工</div>
<div style="position:absolute;left:106px;top:48px;color:#ffffff;font-size:12px;white-space:nowrap;">卫星导航</div>
<div style="position:absolute;left:157px;top:48px;color:#ffffff;font-size:12px;white-space:nowrap;">芯片</div>
<div style="position:absolute;left:186px;top:48px;color:#ffffff;font-size:12px;white-space:nowrap;">机器人概念</div>
<div style="position:absolute;left:248px;top:48px;color:#ffffff;font-size:12px;white-space:nowrap;">机器视觉</div>
<div style="position:absolute;left:298px;top:48px;color:#ffffff;font-size:12px;white-space:nowrap;">无人机</div>
<div style="position:absolute;left:336px;top:48px;color:#ffffff;font-size:12px;white-space:nowrap;">量子科技</div>
<div style="position:absolute;left:388px;top:48px;color:#ffffff;font-size:12px;white-space:nowrap;">无人驾驶</div>
<div style="position:absolute;left:439px;top:48px;color:#ffffff;font-size:12px;white-space:nowrap;">车联网</div>
<div style="position:absolute;left:396px;top:500px;color:#c0c0c0;font-size:12px;white-space:nowrap;">14.87</div>
<div style="position:absolute;left:1033px;top:54px;color:#c0c0c0;font-size:12px;white-space:nowrap;">36.18</div>
<div style="position:absolute;left:893px;top:266px;color:#00e8e8;font-size:12px;white-space:nowrap;">龙死</div>
<div style="position:absolute;left:1079px;top:56px;color:#00e8e8;font-size:12px;white-space:nowrap;">龙死</div>
<div style="position:absolute;left:764px;top:438px;color:#ff0000;font-size:11px;white-space:nowrap;">飞</div>
<div style="position:absolute;left:764px;top:450px;color:#ff0000;font-size:11px;white-space:nowrap;">龙</div>
<div style="position:absolute;left:763px;top:573px;color:#00ff00;font-size:11px;white-space:nowrap;">异动</div>
<svg style="position:absolute;left:1px;top:545px" width="13" height="13" viewBox="0 0 13 13"><circle cx="6" cy="6" r="6" fill="#858585"/><polyline points="3.2,4.6 6,7.4 8.8,4.6" fill="none" stroke="#1a1a1a" stroke-width="1.3"/></svg>
<div style="position:absolute;left:17px;top:544px;color:#c8c8c8;font-size:12px;white-space:nowrap;">资金副图</div>
<div style="position:absolute;left:70px;top:544px;color:#ffff00;font-size:12px;white-space:nowrap;">主力吸筹: 0.00</div>
<div style="position:absolute;left:153px;top:544px;color:#ff00ff;font-size:12px;white-space:nowrap;">上轨: 23.28</div>
<div style="position:absolute;left:219px;top:544px;color:#ff00ff;font-size:12px;white-space:nowrap;">下轨: -23.28</div>
<div style="position:absolute;left:289px;top:544px;color:#00ff00;font-size:12px;white-space:nowrap;">XG: 0.00</div>
<div style="position:absolute;left:340px;top:544px;color:#c8c8c8;font-size:12px;white-space:nowrap;">异动: 0.00</div>
<svg style="position:absolute;left:1px;top:625px" width="13" height="13" viewBox="0 0 13 13"><circle cx="6" cy="6" r="6" fill="#858585"/><polyline points="3.2,4.6 6,7.4 8.8,4.6" fill="none" stroke="#1a1a1a" stroke-width="1.3"/></svg>
<div style="position:absolute;left:17px;top:624px;color:#c8c8c8;font-size:12px;white-space:nowrap;">起动点</div>
<div style="position:absolute;left:58px;top:624px;color:#ffffff;font-size:12px;white-space:nowrap;">XG: 0.00</div>
<svg style="position:absolute;left:1px;top:686px" width="13" height="13" viewBox="0 0 13 13"><circle cx="6" cy="6" r="6" fill="#858585"/><polyline points="3.2,4.6 6,7.4 8.8,4.6" fill="none" stroke="#1a1a1a" stroke-width="1.3"/></svg>
<div style="position:absolute;left:17px;top:685px;color:#c8c8c8;font-size:12px;white-space:nowrap;">筹码</div>
<div style="position:absolute;left:46px;top:685px;color:#ffff00;font-size:12px;white-space:nowrap;">主力吸筹: 0.00</div>
<div style="position:absolute;left:129px;top:685px;color:#ff0000;font-size:12px;white-space:nowrap;">赶快出手: 0.00</div>
<div style="position:absolute;left:212px;top:685px;color:#ff00ff;font-size:12px;white-space:nowrap;">多方强度大小: 75.24</div>
<div style="position:absolute;left:326px;top:685px;color:#3cc83c;font-size:12px;white-space:nowrap;">空方强度大小: 23.84</div>
<div style="position:absolute;left:441px;top:685px;color:#00e8e8;font-size:12px;white-space:nowrap;">今日保护价: 30.70</div>
<div style="position:absolute;left:542px;top:685px;color:#ff00ff;font-size:12px;white-space:nowrap;">GF_B: 81.80</div>
<svg style="position:absolute;left:1px;top:752px" width="13" height="13" viewBox="0 0 13 13"><circle cx="6" cy="6" r="6" fill="#858585"/><polyline points="3.2,4.6 6,7.4 8.8,4.6" fill="none" stroke="#1a1a1a" stroke-width="1.3"/></svg>
<div style="position:absolute;left:17px;top:751px;color:#c8c8c8;font-size:12px;white-space:nowrap;">MACD(12,26,9)</div>
<div style="position:absolute;left:105px;top:751px;color:#ffffff;font-size:12px;white-space:nowrap;">DIF: 3.67</div>
<div style="position:absolute;left:160px;top:751px;color:#ffff00;font-size:12px;white-space:nowrap;">DEA: 3.62</div>
<div style="position:absolute;left:218px;top:751px;color:#ff00ff;font-size:12px;white-space:nowrap;">MACD: 0.11</div>
</body></html>
